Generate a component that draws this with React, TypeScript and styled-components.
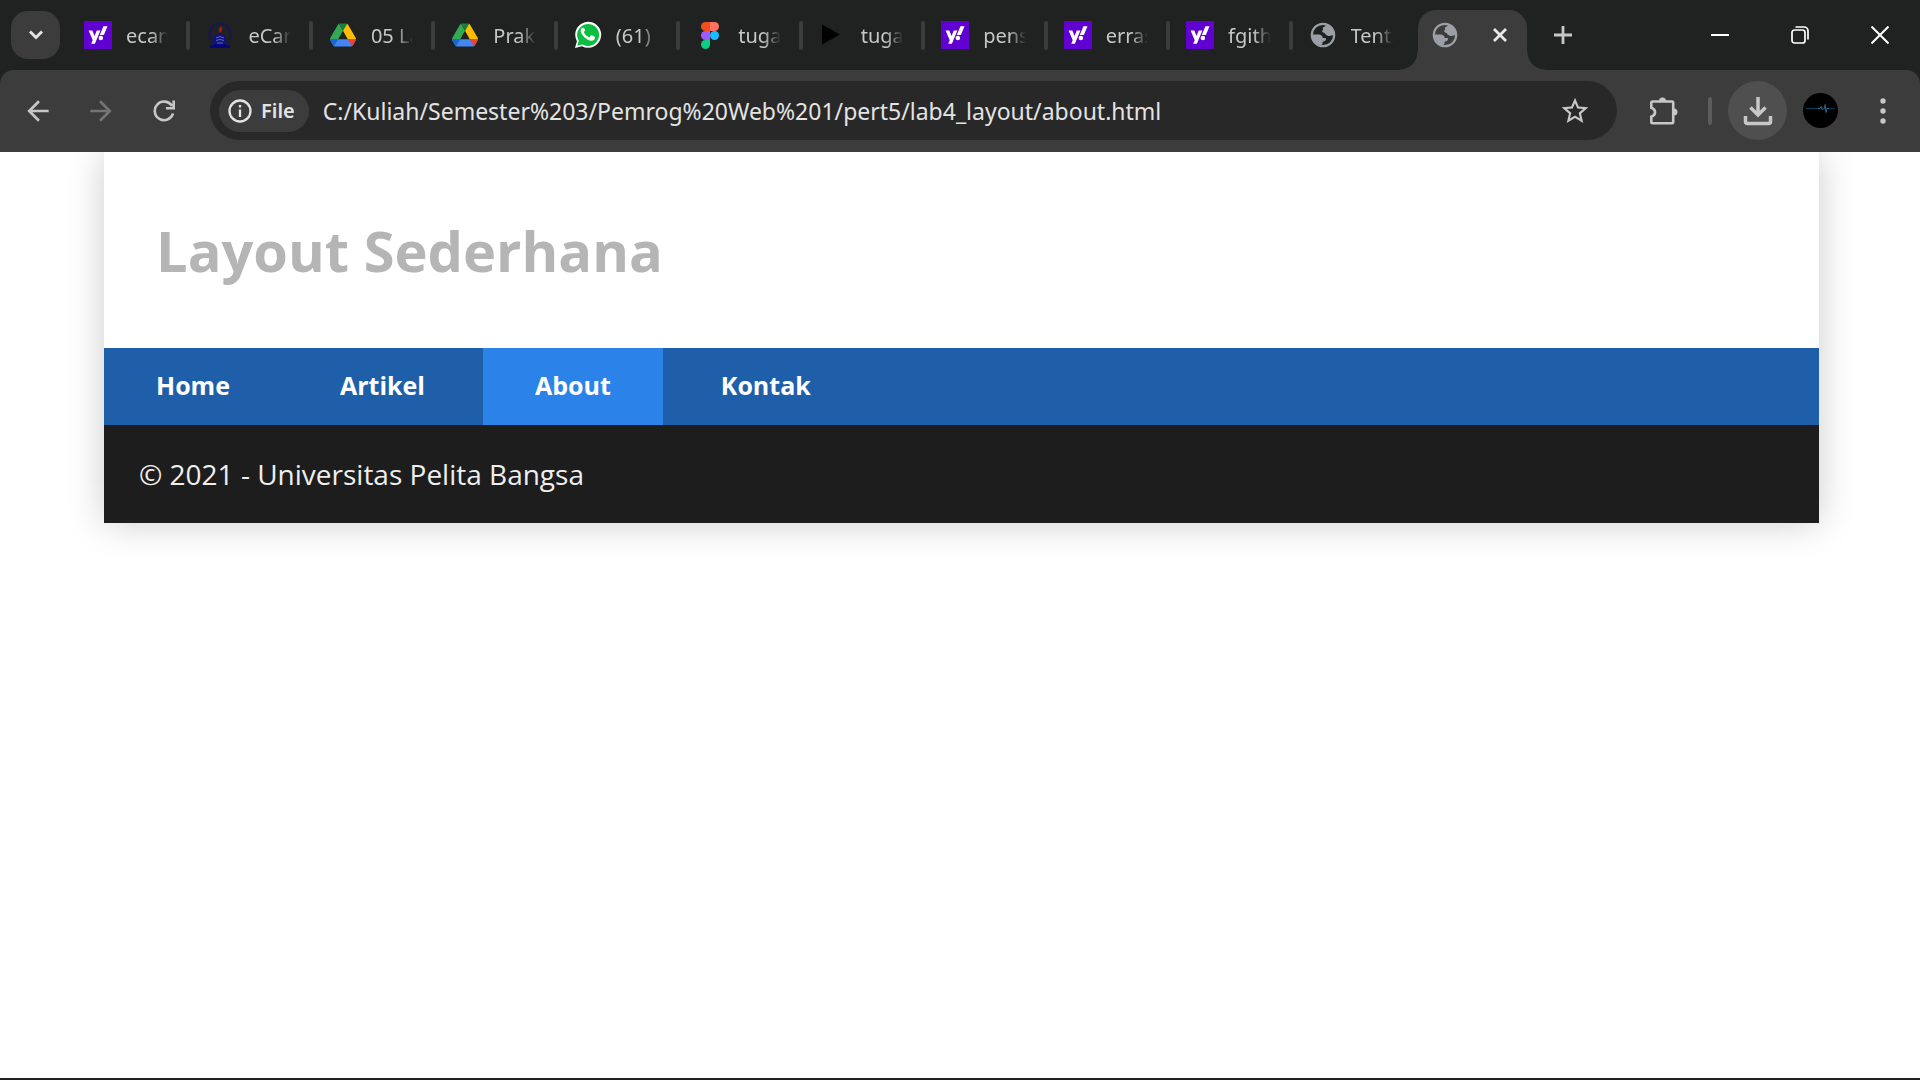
import React from "react";
import styled, { createGlobalStyle, css } from "styled-components";
import { FaYahoo } from "react-icons/fa";
import { MdArrowBack, MdArrowForward, MdStarOutline } from "react-icons/md";

const ui = `"Noto Sans", "Open Sans", sans-serif`;

const GlobalStyle = createGlobalStyle`
  * { box-sizing: border-box; }
  body { margin: 0; background: #fff; }
  button { border: 0; padding: 0; background: none; color: inherit; font: inherit; }
`;

const Window = styled.div`
  display: flex;
  flex-direction: column;
  min-height: 100vh;
  border-bottom: 2px solid #231f20;
  font-family: ${ui};
`;

const TabStrip = styled.header`
  display: flex;
  height: 70px;
  padding-left: 11px;
  background: #202221;
  color: #c7c7c7;
`;

const TabSearch = styled.button`
  display: grid;
  place-items: center;
  width: 49px;
  height: 48px;
  margin: 11px 8px 0 0;
  border-radius: 17px;
  background: #3c3c3c;
  color: #e3e3e3;
`;

const TabList = styled.div`
  display: flex;
  flex: 0 1 1347px;
  min-width: 0;
`;

const Tab = styled.button`
  display: flex;
  flex: 1 1 0;
  align-items: center;
  min-width: 0;
  padding-left: 16px;
  text-align: left;
`;

const Favicon = styled.span`
  display: grid;
  flex: none;
  place-items: center;
  width: 28px;
  height: 28px;
  margin-right: 14px;
`;

const YahooIcon = styled(Favicon)`
  background: #6001d2;
  color: #fff;
`;

const TabTitle = styled.span`
  flex: 1;
  overflow: hidden;
  margin-right: 18px;
  padding-top: 2px;
  font-size: 20px;
  line-height: 28px;
  white-space: nowrap;
  mask-image: linear-gradient(to right, #000 60%, transparent);
`;

const TabDivider = styled.span<{ $hidden: boolean }>`
  width: 4px;
  height: 29px;
  border-radius: 2px;
  background: ${(p) => (p.$hidden ? "transparent" : "#3c3c3c")};
`;

const flare = css`
  content: "";
  position: absolute;
  bottom: 0;
  width: 18px;
  height: 18px;
`;

const ActiveTab = styled.div`
  position: relative;
  display: flex;
  align-items: center;
  justify-content: space-between;
  width: 109px;
  height: 60px;
  margin: 10px 0 0 3px;
  padding: 0 19px 10px 13px;
  border-radius: 18px 18px 0 0;
  background: #3c3c3c;
  color: #e9e9e9;
  &::before {
    ${flare}
    right: 100%;
    background: radial-gradient(circle at 0 0, transparent 17px, #3c3c3c 18px);
  }
  &::after {
    ${flare}
    left: 100%;
    background: radial-gradient(circle at 100% 0, transparent 17px, #3c3c3c 18px);
  }
  ${Favicon} { margin: 0; }
`;

const NewTab = styled.button`
  width: 48px;
  margin-left: 12px;
  display: grid;
  place-items: center;
`;

const WindowControls = styled.div`
  display: flex;
  margin-left: auto;
  color: #fff;
`;

const WindowButton = styled.button`
  display: grid;
  place-items: center;
  width: 80px;
`;

const ToolbarBack = styled.div`
  background: #202221;
`;

const Toolbar = styled.div`
  display: flex;
  align-items: center;
  gap: 16px;
  height: 82px;
  padding: 0 8px 1px 6px;
  border-radius: 14px 14px 0 0;
  background: #3c3c3c;
  color: #c7c7c7;
`;

const NavButtons = styled.div`
  display: flex;
`;

const NavButton = styled.button`
  display: grid;
  place-items: center;
  width: 63px;
  height: 58px;
  &:disabled { color: #757575; }
`;

const AddressBar = styled.form`
  display: flex;
  flex: 1;
  align-items: center;
  min-width: 0;
  height: 59px;
  margin-left: -1px;
  padding: 0 26px 0 9px;
  border-radius: 30px;
  background: #282828;
`;

const SchemeChip = styled.button`
  display: flex;
  align-items: center;
  gap: 9px;
  height: 42px;
  padding: 0 14px 0 9px;
  border-radius: 21px;
  background: #3c3c3c;
  color: #e3e3e3;
  font-size: 20px;
  font-weight: 600;
`;

const AddressInput = styled.input`
  flex: 1;
  min-width: 0;
  margin-left: 14px;
  padding: 0;
  border: 0;
  outline: 0;
  background: none;
  color: #e3e3e3;
  font-family: ${ui};
  font-size: 23px;
`;

const IconButton = styled.button<{ $width: number; $filled?: boolean }>`
  display: grid;
  flex: none;
  place-items: center;
  width: ${(p) => p.$width}px;
  height: 59px;
  border-radius: 30px;
  background: ${(p) => (p.$filled ? "#4f4f4f" : "transparent")};
`;

const ToolbarDivider = styled.span`
  width: 4px;
  height: 28px;
  border-radius: 2px;
  background: #5c5c5c;
`;

const Page = styled.div`
  flex: 1;
  overflow: hidden;
  padding: 0 101px 0 104px;
  font-family: "Open Sans", sans-serif;
`;

const Container = styled.div`
  box-shadow: 0 0 35px #ccc;
`;

const PageHeader = styled.header`
  padding: 70px 52px;
  background: #fff;
`;

const Title = styled.h1`
  margin: 0;
  color: #b5b5b5;
  font-size: 56px;
  line-height: 56px;
`;

const Menu = styled.nav`
  display: flex;
  gap: 6px;
  background: #1f5faa;
`;

const MenuLink = styled.a<{ $active?: boolean }>`
  padding: 25px 52px 27px;
  background: ${(p) => (p.$active ? "#2b83ea" : "transparent")};
  color: #fff;
  font-size: 25px;
  font-weight: 700;
  line-height: 25px;
  text-decoration: none;
`;

const Footer = styled.footer`
  padding: 35px;
  background: #1d1d1d;
  color: #eee;
  font-size: 28px;
  line-height: 28px;
`;

const Copyright = styled.p`
  margin: 0;
`;

const Yahoo = () => <YahooIcon><FaYahoo size={20} /></YahooIcon>;

const Drive = () => (
  <Favicon>
    <svg width="26" height="24" viewBox="0 0 87.3 78">
      <path fill="#4285f4" d="m6.6 66.85 3.85 6.65c.8 1.4 1.95 2.5 3.3 3.3l13.75-23.8H0c0 1.55.4 3.1 1.2 4.5zM73.55 76.8c1.35-.8 2.5-1.9 3.3-3.3l1.6-2.75 7.65-13.25c.8-1.4 1.2-2.95 1.2-4.5H27.5l-13.75 23.8c1.35.8 2.9 1.2 4.5 1.2h50.8c1.6 0 3.15-.45 4.5-1.2z" />
      <path fill="#34a853" d="M43.65 25 29.9 1.2c-1.35.8-2.5 1.9-3.3 3.3L1.2 48.5A9 9 0 0 0 0 53h27.5z" />
      <path fill="#188038" d="M43.65 25 57.4 1.2C56.05.4 54.5 0 52.9 0H34.4c-1.6 0-3.15.45-4.5 1.2z" />
      <path fill="#1967d2" d="m0 53 6.6 13.85 3.85 6.65c.8 1.4 1.95 2.5 3.3 3.3L27.5 53z" />
      <path fill="#fbbc04" d="m73.4 26.5-12.7-22c-.8-1.4-1.95-2.5-3.3-3.3L43.65 25 59.8 53h27.45c0-1.55-.4-3.1-1.2-4.5z" />
      <path fill="#ea4335" d="M73.55 76.8c1.35-.8 2.5-1.9 3.3-3.3l9.25-16c.8-1.4 1.2-2.95 1.2-4.5H59.8z" />
    </svg>
  </Favicon>
);

const Campus = () => (
  <Favicon>
    <svg width="28" height="28" viewBox="0 0 28 28">
      <circle cx="14" cy="13" r="10.500" fill="none" stroke="#15155a" strokeWidth="2.400" strokeDasharray="2 .8" />
      <path d="M4 27v-2.500h3l1.500-2h11l1.500 2h3V27z" fill="#06067c" />
      <path d="M8 15l3-1 3-2.500 3 2.500 3 1v8H8z" fill="#111184" />
      <path d="M10 17l4-1.500 4 1.500M10 19.500l4-1 4 1M11 22h6" stroke="#5f6cae" strokeWidth="1" fill="none" />
      <path d="M15.200 5c-2.500 2.500-2.700 5-1 7 2-2 2.200-4 1-7z" fill="#b9180f" />
    </svg>
  </Favicon>
);

const WhatsApp = () => (
  <Favicon>
    <svg width="28" height="28" viewBox="0 0 28 28">
      <path d="M1 27l1.900-6.800A13 13 0 1 1 8 25.200z" fill="#fff" />
      <path d="M3.300 24.800l1.500-5A11 11 0 1 1 8.500 23.400z" fill="#0abf3f" />
      <path d="M10.300 7.500c-.4-.9-.8-.8-1.300-.8-1 0-2.300 1.200-2.300 3.100 0 3.900 6.200 9.900 10.700 9.900 2.300 0 3.600-1.400 3.600-3.200 0-.6-.2-.7-.7-1l-2.500-1.200c-.5-.2-.8-.1-1.100.3l-1 1.300c-.3.300-.6.400-1 .2-2-.9-3.700-2.500-4.700-4.500-.2-.4-.1-.6.1-.9l.8-1c.3-.4.200-.7.1-1z" fill="#fff" />
    </svg>
  </Favicon>
);

const Figma = () => (
  <Favicon>
    <svg width="18" height="27" viewBox="0 0 18 27">
      <path d="M4.500 0H9v9H4.500a4.500 4.500 0 0 1 0-9z" fill="#f24e1e" />
      <path d="M9 0h4.500a4.500 4.500 0 0 1 0 9H9z" fill="#ff7262" />
      <path d="M4.500 9H9v9H4.500a4.500 4.500 0 0 1 0-9z" fill="#a259ff" />
      <circle cx="13.500" cy="13.500" r="4.500" fill="#1abcfe" />
      <path d="M4.500 18H9v4.500A4.500 4.500 0 1 1 4.500 18z" fill="#0acf83" />
    </svg>
  </Favicon>
);

const Play = () => (
  <Favicon>
    <svg width="28" height="28" viewBox="0 0 28 28"><path d="M3 3.500l18 10L3 23.500z" fill="#000" /></svg>
  </Favicon>
);

const Globe = () => (
  <Favicon>
    <svg width="28" height="28" viewBox="0 0 28 28">
      <circle cx="14" cy="14" r="11.200" fill="none" stroke="#9aa0a6" strokeWidth="2.200" />
      <path d="M17.500 3.500c-.8 1.500-1.800 2-3 2.600-1 .6-.8 1.900-.2 2.600-1.200.3-1.300 1.500-.8 2.300.7 1 2 .6 2.500 1.500.8 1.600 2.500 2.700 4.500 2.500 1.500 0 2.500-.8 4.500-1V10l-3.500-5zM3 13.500h6.500c2.500 0 4.200 1.400 4.200 3.600h2.300c.8 0 1.200.6 1 1.300-.4 1.200-1.500 2-2.800 2-.8.2-.7 1.400-.7 2.100 0 1-1 1-2 1.900l-4-2L3 17z" fill="#9aa0a6" />
    </svg>
  </Favicon>
);

const tabs = [
  { icon: Yahoo, title: "ecan" },
  { icon: Campus, title: "eCar" },
  { icon: Drive, title: "05 La" },
  { icon: Drive, title: "Prak" },
  { icon: WhatsApp, title: "(61)" },
  { icon: Figma, title: "tuga" },
  { icon: Play, title: "tuga" },
  { icon: Yahoo, title: "pens" },
  { icon: Yahoo, title: "erras" },
  { icon: Yahoo, title: "fgith" },
  { icon: Globe, title: "Tenta" },
];

const menu = ["Home", "Artikel", "About", "Kontak"];

export default function App() {
  return (
    <Window>
      <GlobalStyle />
      <TabStrip>
        <TabSearch aria-label="Search tabs">
          <svg width="16" height="10" viewBox="0 0 16 10" fill="none" stroke="currentColor" strokeWidth="3"><path d="M2 1.500l6 6 6-6" /></svg>
        </TabSearch>
        <TabList>
          {tabs.map(({ icon: Icon, title }, i) => (
            <Tab key={i}>
              <Icon />
              <TabTitle>{title}</TabTitle>
              <TabDivider $hidden={i === tabs.length - 1} />
            </Tab>
          ))}
        </TabList>
        <ActiveTab>
          <Globe />
          <button aria-label="Close tab">
            <svg width="16" height="16" viewBox="0 0 16 16" stroke="currentColor" strokeWidth="2.800" display="block"><path d="M2 2l12 12M14 2L2 14" /></svg>
          </button>
        </ActiveTab>
        <NewTab aria-label="New tab">
          <svg width="18" height="18" viewBox="0 0 18 18" stroke="currentColor" strokeWidth="2.800"><path d="M9 0v18M0 9h18" /></svg>
        </NewTab>
        <WindowControls>
          <WindowButton aria-label="Minimize">
            <svg width="18" height="18" viewBox="0 0 18 18"><path d="M0 8h18v2H0z" fill="currentColor" /></svg>
          </WindowButton>
          <WindowButton aria-label="Restore">
            <svg width="18" height="18" viewBox="0 0 18 18" fill="none" stroke="currentColor" strokeWidth="1.700">
              <rect x="1" y="4" width="13" height="13" rx="2.500" />
              <path d="M4.500 1H13a4 4 0 0 1 4 4v8.500" />
            </svg>
          </WindowButton>
          <WindowButton aria-label="Close">
            <svg width="18" height="18" viewBox="0 0 18 18" stroke="currentColor" strokeWidth="2"><path d="M.5.5l17 17M17.500.5l-17 17" /></svg>
          </WindowButton>
        </WindowControls>
      </TabStrip>
      <ToolbarBack>
        <Toolbar>
          <NavButtons>
            <NavButton aria-label="Back"><MdArrowBack size={32} /></NavButton>
            <NavButton aria-label="Forward" disabled><MdArrowForward size={32} /></NavButton>
            <NavButton aria-label="Reload">
              <svg width="22" height="22" viewBox="0 0 22 22" fill="none" stroke="currentColor" strokeWidth="2.600">
                <path d="M20 13.500A9.300 9.300 0 1 1 19 6M20.700.5v7.700H13" />
              </svg>
            </NavButton>
          </NavButtons>
          <AddressBar onSubmit={(e) => e.preventDefault()}>
            <SchemeChip type="button">
              <svg width="24" height="24" viewBox="0 0 24 24" fill="none" stroke="currentColor" strokeWidth="2.300">
                <circle cx="12" cy="12" r="10.500" />
                <path d="M12 10.500V18M12 6v2.500" />
              </svg>
              File
            </SchemeChip>
            <AddressInput aria-label="Address" defaultValue="C:/Kuliah/Semester%203/Pemrog%20Web%201/pert5/lab4_layout/about.html" />
            <button type="button" aria-label="Bookmark this page"><MdStarOutline size={32} display="block" /></button>
          </AddressBar>
          <IconButton $width={59} aria-label="Extensions">
            <svg width="30" height="30" viewBox="0 0 30 30">
              <path d="M4.500 5.500H24a1.200 1.200 0 0 1 1.200 1.200V26a1.200 1.200 0 0 1-1.200 1.200H4.500A1.200 1.200 0 0 1 3.300 26v-5.200c5-1.500 5-7.500 0-9V6.700a1.200 1.200 0 0 1 1.200-1.200z" fill="none" stroke="currentColor" strokeWidth="2.600" />
              <path d="M11 5a3.500 3.500 0 0 1 7 0zM26 12.500a3.500 3.500 0 0 1 0 7z" fill="currentColor" />
            </svg>
          </IconButton>
          <ToolbarDivider />
          <IconButton $width={59} $filled aria-label="Downloads">
            <svg width="30" height="30" viewBox="0 0 30 30" fill="none" stroke="currentColor" strokeWidth="3.500">
              <path d="M15 1v18M7.500 11.500L15 19l7.500-7.500M2.500 20v5.500a2 2 0 0 0 2 2h21a2 2 0 0 0 2-2V20" />
            </svg>
          </IconButton>
          <IconButton $width={35} aria-label="Profile">
            <svg width="35" height="35" viewBox="0 0 35 35" fill="none">
              <circle cx="17.500" cy="17.500" r="17.500" fill="#000" />
              <path d="M3 15.500h13M24 15.500h8" stroke="#0d3a55" strokeWidth="1" />
              <path d="M15 15.500h2l1-2 1 3 1.500-1h1l.7-4 .9 8 .9-4h2" stroke="#1f6f9f" strokeWidth="1" />
            </svg>
          </IconButton>
          <IconButton $width={58} aria-label="Menu">
            <svg width="6" height="26" viewBox="0 0 6 26" fill="currentColor">
              <circle cx="3" cy="3" r="2.700" /><circle cx="3" cy="13" r="2.700" /><circle cx="3" cy="23" r="2.700" />
            </svg>
          </IconButton>
        </Toolbar>
      </ToolbarBack>
      <Page>
        <Container>
          <PageHeader><Title>Layout Sederhana</Title></PageHeader>
          <Menu>
            {menu.map((item) => (
              <MenuLink key={item} href="#" $active={item === "About"}>{item}</MenuLink>
            ))}
          </Menu>
          <Footer><Copyright>© 2021 - Universitas Pelita Bangsa</Copyright></Footer>
        </Container>
      </Page>
    </Window>
  );
}
